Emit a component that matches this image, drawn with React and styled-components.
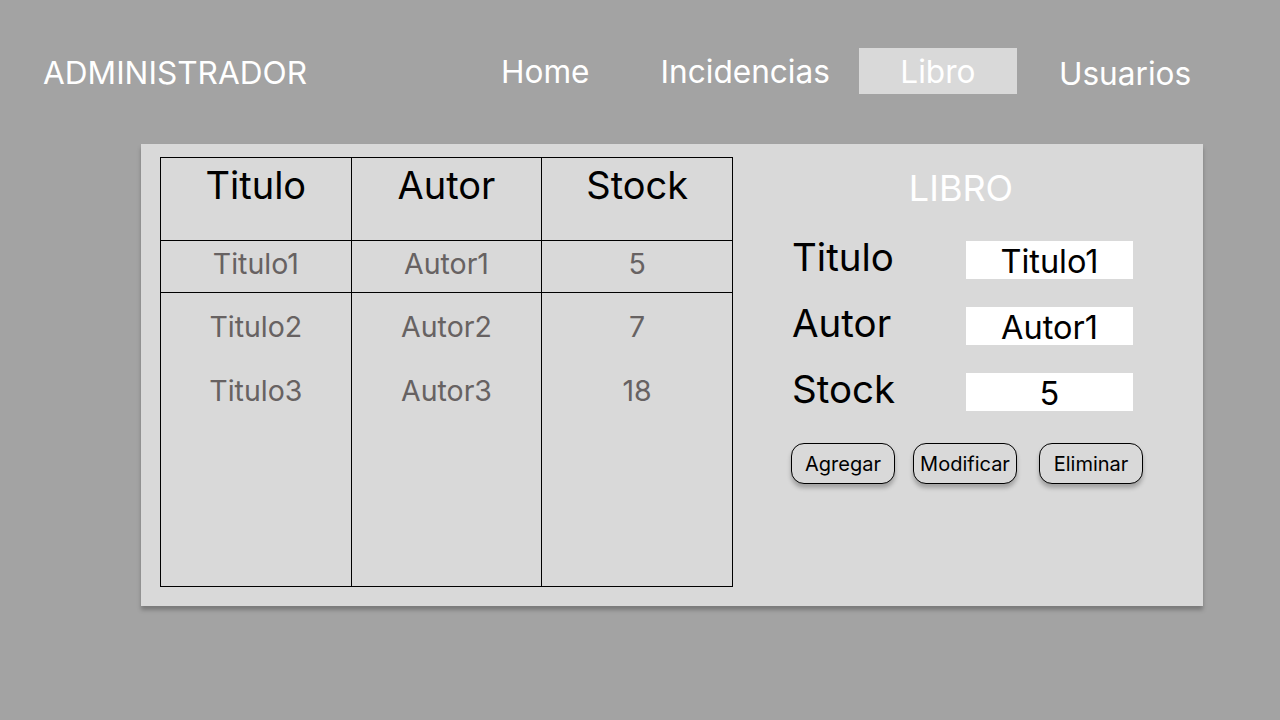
import React from 'react';
import styled, { createGlobalStyle } from 'styled-components';

const GlobalStyle = createGlobalStyle`
  body {
    margin: 0;
    background: #a3a3a3;
    font-family: Inter, "Noto Sans", sans-serif;
  }
`;

const Page = styled.div`
  width: 1280px;
  height: 720px;
  background: #a3a3a3;
  overflow: hidden;
`;

const Header = styled.header`
  display: flex;
  align-items: center;
  height: 46px;
  padding: 48px 0 0 43px;
`;

const Brand = styled.div`
  color: #fff;
  font-size: 31.6px;
  line-height: 1;
  margin-top: 4px;
  width: 263px;
`;

const Nav = styled.nav`
  display: flex;
  align-items: center;
  height: 46px;
  margin-left: 195px;
`;

const NavItem = styled.div`
  display: flex;
  align-items: center;
  justify-content: center;
  height: 46px;
  margin-left: ${(p) => p.$gap || 0}px;
  width: ${(p) => (p.$active ? '158px' : 'auto')};
  box-sizing: border-box;
  background: ${(p) => (p.$active ? '#d9d9d9' : 'transparent')};
  color: #fff;
  font-size: 31.6px;
  padding-top: ${(p) => p.$drop || 0}px;
`;

const Panel = styled.section`
  display: flex;
  align-items: flex-start;
  width: 1062px;
  height: 462px;
  margin: 50px 0 0 141px;
  padding: 13px 0 0 19px;
  box-sizing: border-box;
  background: #d9d9d9;
  box-shadow: 0 4px 4px rgba(0, 0, 0, 0.25);
`;

const Table = styled.table`
  border-collapse: collapse;
  width: 573px;
  table-layout: fixed;
  border: 1px solid #000;
`;

const Cell = styled.td`
  border-left: 1px solid #000;
  border-right: 1px solid #000;
  border-bottom: ${(p) => (p.$line ? '1px solid #000' : 'none')};
  text-align: center;
  padding: 0 0 ${(p) => (p.$line ? 7 : 0)}px;
  vertical-align: middle;
  color: #676262;
  font-size: 28.5px;
`;

const HeadCell = styled.th`
  border: 1px solid #000;
  height: 83px;
  box-sizing: border-box;
  text-align: center;
  vertical-align: top;
  padding: 5px 0 0;
  font-weight: 400;
  font-size: 38px;
  color: #000;
  line-height: 44px;
`;

const Row = styled.tr`
  height: ${(p) => p.$h}px;
`;

const Editor = styled.div`
  display: flex;
  flex-direction: column;
  padding-left: 58px;
`;

const Title = styled.h2`
  width: 340px;
  margin: 9px 0 0;
  text-align: center;
  color: #fff;
  font-weight: 400;
  font-size: 36px;
  line-height: 44px;
`;

const Fields = styled.div`
  display: grid;
  grid-template-columns: 175px 167px;
  row-gap: 28px;
  margin-top: 31px;
`;

const Label = styled.label`
  display: flex;
  align-items: center;
  font-size: 38.5px;
  color: #000;
  height: 38px;
  margin-top: -3px;
  padding-left: 1px;
`;

const Value = styled.div`
  display: flex;
  align-items: center;
  justify-content: center;
  height: 38px;
  background: #fff;
  color: #000;
  font-size: 32.5px;
  padding-top: 2px;
  box-sizing: border-box;
`;

const Actions = styled.div`
  display: flex;
  margin-top: 32px;
`;

const Button = styled.button`
  height: 41px;
  width: 104px;
  margin-left: ${(p) => p.$gap || 0}px;
  padding: 0;
  border: 1px solid #000;
  border-radius: 13px;
  background: #d9d9d9;
  box-shadow: 0 4px 4px rgba(0, 0, 0, 0.25);
  font-family: Inter, "Noto Sans", sans-serif;
  font-size: 20px;
  color: #000;
`;

const books = [
  { titulo: 'Titulo1', autor: 'Autor1', stock: 5 },
  { titulo: 'Titulo2', autor: 'Autor2', stock: 7 },
  { titulo: 'Titulo3', autor: 'Autor3', stock: 18 },
];

const rowHeights = [52, 68, 60];

export default function App() {
  return (
    <Page>
      <GlobalStyle />
      <Header>
        <Brand>ADMINISTRADOR</Brand>
        <Nav>
          <NavItem>Home</NavItem>
          <NavItem $gap={71}>Incidencias</NavItem>
          <NavItem $gap={29} $active>Libro</NavItem>
          <NavItem $gap={42} $drop={4}>Usuarios</NavItem>
        </Nav>
      </Header>
      <Panel>
        <Table>
          <thead>
            <tr>
              <HeadCell>Titulo</HeadCell>
              <HeadCell>Autor</HeadCell>
              <HeadCell>Stock</HeadCell>
            </tr>
          </thead>
          <tbody>
            {books.map((b, i) => (
              <Row key={b.titulo} $h={rowHeights[i]}>
                <Cell $line={i === 0}>{b.titulo}</Cell>
                <Cell $line={i === 0}>{b.autor}</Cell>
                <Cell $line={i === 0}>{b.stock}</Cell>
              </Row>
            ))}
            <Row $h={166}>
              <Cell />
              <Cell />
              <Cell />
            </Row>
          </tbody>
        </Table>
        <Editor>
          <Title>LIBRO</Title>
          <Fields>
            <Label>Titulo</Label>
            <Value>Titulo1</Value>
            <Label>Autor</Label>
            <Value>Autor1</Value>
            <Label>Stock</Label>
            <Value>5</Value>
          </Fields>
          <Actions>
            <Button>Agregar</Button>
            <Button $gap={18}>Modificar</Button>
            <Button $gap={22}>Eliminar</Button>
          </Actions>
        </Editor>
      </Panel>
    </Page>
  );
}
